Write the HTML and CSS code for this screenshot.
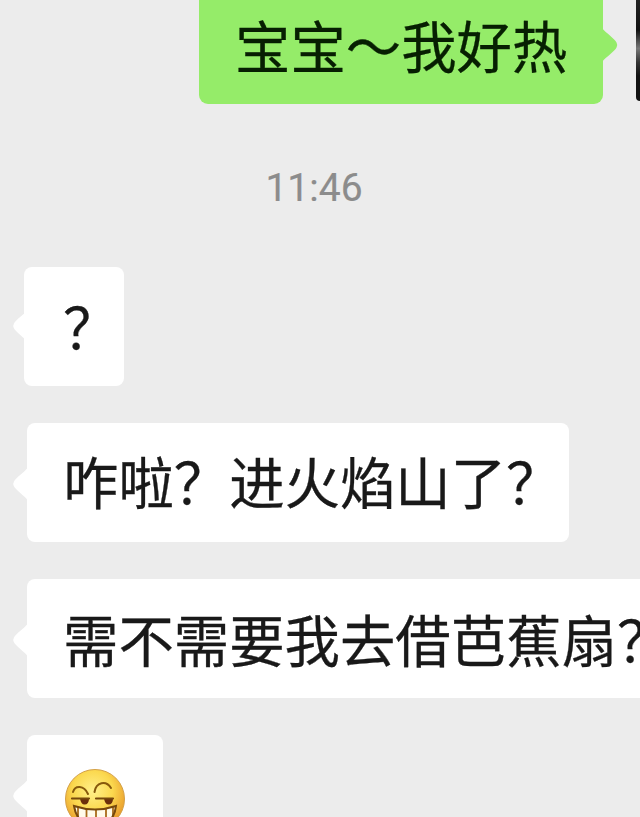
FILE: index.html
```html
<!DOCTYPE html>
<html lang="zh-CN">

<head>
	<meta charset="UTF-8">
	<title>Chat</title>
	<link rel="stylesheet" href="styles.css">
</head>

<body>
	<div class="chat">
		<div class="row row-me">
			<div class="bubble bubble-me">
				<span class="text">宝宝～我好热</span>
				<svg class="tail" width="16" height="34" viewBox="0 0 16 34"><path d="M0 0C4 5 13 11 14.500 14.500Q16 17 14.500 19.500C13 23 4 29 0 34Z" fill="#95ec69" /></svg>
			</div>
			<div class="avatar"></div>
		</div>

		<div class="time">11:46</div>

		<div class="row">
			<div class="bubble bubble-short">
				<svg class="tail" width="16" height="32" viewBox="0 0 16 34"><path d="M16 0C12 5 3 11 1.500 14.500Q0 17 1.500 19.500C3 23 12 29 16 34Z" fill="#fff" /></svg>
				<span class="text">？</span>
			</div>
		</div>

		<div class="row">
			<div class="bubble bubble-mid">
				<svg class="tail" width="16" height="32" viewBox="0 0 16 34"><path d="M16 0C12 5 3 11 1.500 14.500Q0 17 1.500 19.500C3 23 12 29 16 34Z" fill="#fff" /></svg>
				<span class="text">咋啦？进火焰山了？</span>
			</div>
		</div>

		<div class="row">
			<div class="bubble bubble-long">
				<svg class="tail" width="16" height="32" viewBox="0 0 16 34"><path d="M16 0C12 5 3 11 1.500 14.500Q0 17 1.500 19.500C3 23 12 29 16 34Z" fill="#fff" /></svg>
				<span class="text">需不需要我去借芭蕉扇？</span>
			</div>
		</div>

		<div class="row">
			<div class="bubble">
				<svg class="tail" width="16" height="32" viewBox="0 0 16 34"><path d="M16 0C12 5 3 11 1.500 14.500Q0 17 1.500 19.500C3 23 12 29 16 34Z" fill="#fff" /></svg>
				<svg class="emoji" width="60" height="60" viewBox="0 0 60 60">
					<defs>
						<radialGradient id="face" cx="46%" cy="36%" r="62%">
							<stop offset="0" stop-color="#fff08a" />
							<stop offset=".55" stop-color="#fbd84e" />
							<stop offset="1" stop-color="#e99a2b" />
						</radialGradient>
						<clipPath id="mouth">
							<path d="M9 37Q30 44 51 37Q49 56 30 56Q12 56 9 37Z" />
						</clipPath>
					</defs>
					<circle cx="30" cy="30" r="29.500" fill="url(#face)" stroke="#d3a047" />
					<!-- Brows -->
					<g fill="none" stroke="#87590c" stroke-width="2" stroke-linecap="round">
						<path d="M8 23C10 16 19 16 23 25" />
						<path d="M29.500 23C31 13 41 11 46 19" />
					</g>
					<!-- Eyes -->
					<path d="M15 29.500H24Q24 35.500 19.500 35.500Q16 35.500 15 29.500ZM39 29.500H48Q48 35.500 43.500 35.500Q40 35.500 39 29.500Z" fill="#6b2f0b" />
					<path d="M7 29.500H24M31 29.500H48" stroke="#77490c" stroke-width="2.200" stroke-linecap="round" />
					<!-- Teeth -->
					<g clip-path="url(#mouth)">
						<path d="M8 36H52V58H8Z" fill="#fffbea" />
						<path d="M13 36V58M21.500 36V58M31 36V58M41 36V58M48 36V58" stroke="#a96b1a" stroke-width="1.800" />
					</g>
					<path d="M9 37Q30 44 51 37Q49 56 30 56Q12 56 9 37Z" fill="none" stroke="#77490c" stroke-width="2" />
				</svg>
			</div>
		</div>
	</div>
</body>

</html>
```
FILE: styles.css
```css
body {
	margin: 0;
	background: #ececec;
	font-family: "Noto Sans CJK SC", sans-serif;
	color: #191919;
}

.chat {
	height: 817px;
	overflow: hidden;
}

.row {
	display: flex;
	margin-bottom: 37px;
	padding-left: 27px;
}

.row-me {
	justify-content: flex-end;
	gap: 33px;
	margin: 0;
	padding: 0;
}

.bubble {
	position: relative;
	display: flex;
	align-items: center;
	flex-shrink: 0;
	box-sizing: border-box;
	height: 119px;
	padding: 0 37px 0 36px;
	border-radius: 8px;
	background: #fff;
}

.bubble-me {
	width: 404px;
	height: 104px;
	padding: 0 0 12px 36px;
	border-radius: 0 0 9px 9px;
	background: #95ec69;
	color: #071f02;
}

.bubble-short {
	width: 100px;
	margin-left: -3px;
	padding: 2px 0 0 39px;
}

.bubble-mid {
	width: 542px;
	padding-right: 0;
}

.bubble-long {
	padding-top: 4px;
}

.text {
	margin-bottom: 5px;
	font-size: 55.4px;
	line-height: 80px;
	white-space: nowrap;
	-webkit-text-stroke: .3px;
}

.tail {
	position: absolute;
	top: 45px;
	left: -15px;
}

.bubble-short .tail {
	top: 43px;
	left: -12px;
}

.bubble-me .tail {
	top: 28px;
	right: -15px;
	left: auto;
}

.avatar {
	width: 4px;
	height: 101px;
	border-radius: 0 0 0 5px;
	background: linear-gradient(#222 0, #111 30%, #777 48%, #333 62%, #111 75%);
}

.time {
	margin: 54px 0 49px;
	padding-right: 12px;
	font: 39px/60px Roboto, sans-serif;
	text-align: center;
	color: #8c8c8c;
	-webkit-text-stroke: .2px;
}

.emoji {
	margin: 8px 1px 0 2px;
}
```
